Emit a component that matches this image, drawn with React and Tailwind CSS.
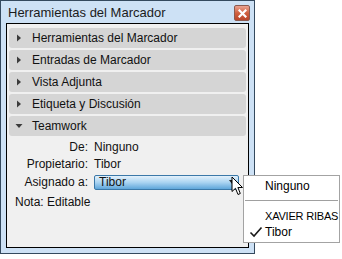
const SECTIONS = [
  { label: "Herramientas del Marcador", open: false },
  { label: "Entradas de Marcador", open: false },
  { label: "Vista Adjunta", open: false },
  { label: "Etiqueta y Discusión", open: false },
  { label: "Teamwork", open: true },
];

function Arrow({ open }) {
  return (
    <svg className="w-[8px] h-[8px] shrink-0" viewBox="0 0 8 8">
      {open ? (
        <path d="M0.5 2 L7.5 2 L4 6 Z" fill="#3c3c3c" />
      ) : (
        <path d="M2 0.5 L6 4 L2 7.5 Z" fill="#3c3c3c" />
      )}
    </svg>
  );
}

export default function App() {
  return (
    <div className="relative w-[342px] h-[259px] bg-white text-[12px] text-[#111] font-['Liberation_Sans',Arial,sans-serif]">
      {/* window */}
      <div className="w-[255px] h-[254px] border border-[#34495e] bg-[#cde1f5] flex flex-col px-[5px] pb-[5px]">
        {/* title bar */}
        <div className="h-[22px] flex items-start justify-between">
          <span className="pl-[2px] pt-[4px] text-[13px] leading-[16px] text-[#1b1b1b]">
            Herramientas del Marcador
          </span>
          <div className="mt-[4px] mr-[-1px] w-[16px] h-[16px] rounded-[2px] border border-[#8a5a50] bg-gradient-to-b from-[#e9a291] via-[#d0603f] to-[#b9452a] flex items-center justify-center">
            <svg className="w-[9px] h-[9px]" viewBox="0 0 9 9">
              <path d="M1.5 1.5 L7.5 7.5 M7.5 1.5 L1.5 7.5" stroke="#fff" strokeWidth="2.2" strokeLinecap="square" />
            </svg>
          </div>
        </div>

        {/* content */}
        <div className="flex-1 border border-black bg-[#f0f0f0] pt-[4px] px-[2px] flex flex-col">
          <div className="flex flex-col gap-[2px]">
            {SECTIONS.map((s) => (
              <div
                key={s.label}
                className="h-[20px] rounded-[3px] bg-[#d5d5d5] flex items-center gap-[9px] pl-[6px]"
              >
                <Arrow open={s.open} />
                <span className="leading-[14px]">{s.label}</span>
              </div>
            ))}
          </div>

          <div className="grid grid-cols-[79px_1fr] gap-x-[6px] items-center mt-[3px]">
            <span className="h-[17px] leading-[17px] text-right">De:</span>
            <span className="h-[17px] leading-[17px]">Ninguno</span>
            <span className="h-[17px] leading-[17px] text-right">Propietario:</span>
            <span className="h-[17px] leading-[17px]">Tibor</span>
            <span className="h-[18px] leading-[18px] text-right">Asignado a:</span>
            <div className="h-[15px] mr-[7px] border border-[#3b78a8] rounded-[2px] bg-gradient-to-b from-[#e3f1fb] via-[#a9d3f1] to-[#5ea6da] flex items-center justify-between pl-[4px] pr-[3px]">
              <span className="text-[12px] leading-[13px]">Tibor</span>
              <svg className="w-[6px] h-[5px]" viewBox="0 0 6 5">
                <path d="M0 0 L6 0 L3 4 Z" fill="#222" />
              </svg>
            </div>
          </div>
          <div className="pl-[6px] mt-[2px] h-[18px] leading-[18px]">Nota: Editable</div>
        </div>
      </div>

      {/* popup menu */}
      <div className="absolute left-[243px] top-[175px] w-[97px] h-[68px] bg-white border border-[#a3a3a3] flex flex-col text-[11px] whitespace-nowrap">
        <div className="h-[18px] mt-[1px] pl-[21px] leading-[18px] text-[12px] text-[#000]">Ninguno</div>
        <div className="mx-[1px] mt-[5px] h-px bg-[#a0a0a0]" />
        <div className="mt-[7px] h-[16px] pl-[21px] leading-[16px] tracking-[-0.2px] text-[#000]">XAVIER RIBAS</div>
        <div className="h-[16px] flex items-center leading-[16px] text-[12px] text-[#000]">
          <svg className="w-[14px] h-[12px] ml-[5px] mr-[2px]" viewBox="0 0 14 12">
            <path d="M1.5 6.5 L5 10 L12.5 1.5" fill="none" stroke="#1a1a1a" strokeWidth="1.6" />
          </svg>
          <span>Tibor</span>
        </div>
      </div>

      {/* cursor */}
      <svg className="absolute left-[231px] top-[176px] w-[13px] h-[20px]" viewBox="0 0 13 20">
        <path
          d="M1 1 L1 15.5 L4.5 12.3 L7 18.5 L9.3 17.5 L6.9 11.5 L11.5 11.5 Z"
          fill="#fff"
          stroke="#000"
          strokeWidth="1"
          strokeLinejoin="round"
        />
      </svg>
    </div>
  );
}
